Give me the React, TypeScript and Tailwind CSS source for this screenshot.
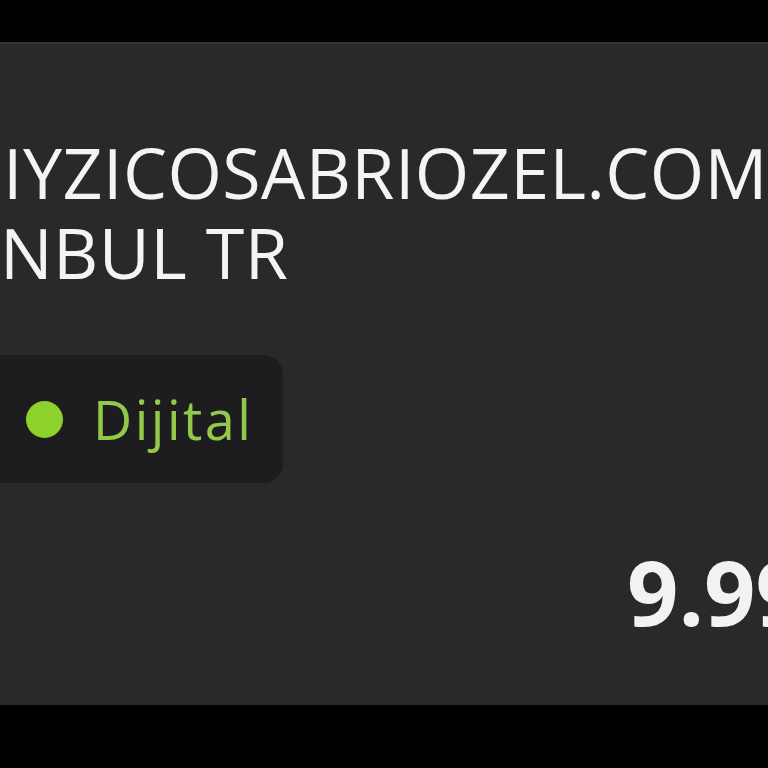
export default function App() {
  return (
    <div className="h-[768px] w-[768px] overflow-hidden bg-black flex flex-col" style={{ fontFamily: '"Open Sans", "Noto Sans", sans-serif' }}>
      <div className="h-[42px] shrink-0" />
      <div className="h-[663px] shrink-0 overflow-hidden bg-[#29292b] border-t-2 border-[#343436] flex flex-col">
        <div className="pt-[88px] pl-[3px] text-[70px] leading-[80px] text-[#f4f4f4] whitespace-nowrap tracking-[0.4px]">
          <div>IYZICOSABRIOZEL.COM</div>
          <div className="-ml-[3px]">NBUL TR</div>
        </div>
        <div className="mt-[63px] flex">
          <div className="h-[128px] w-[283px] rounded-r-[20px] bg-[#1d1d1f] flex items-center gap-[30px] pl-[26px]">
            <span className="h-[37px] w-[37px] rounded-full bg-[#8ed12b] shrink-0" />
            <span className="text-[54px] text-[#93c94a] tracking-[2.5px]">Dijital</span>
          </div>
        </div>
        <div className="mt-[63px] pl-[627px] whitespace-nowrap text-[90px] font-bold leading-none text-[#f2f2f2]">9.99 TL</div>
      </div>
    </div>
  );
}
